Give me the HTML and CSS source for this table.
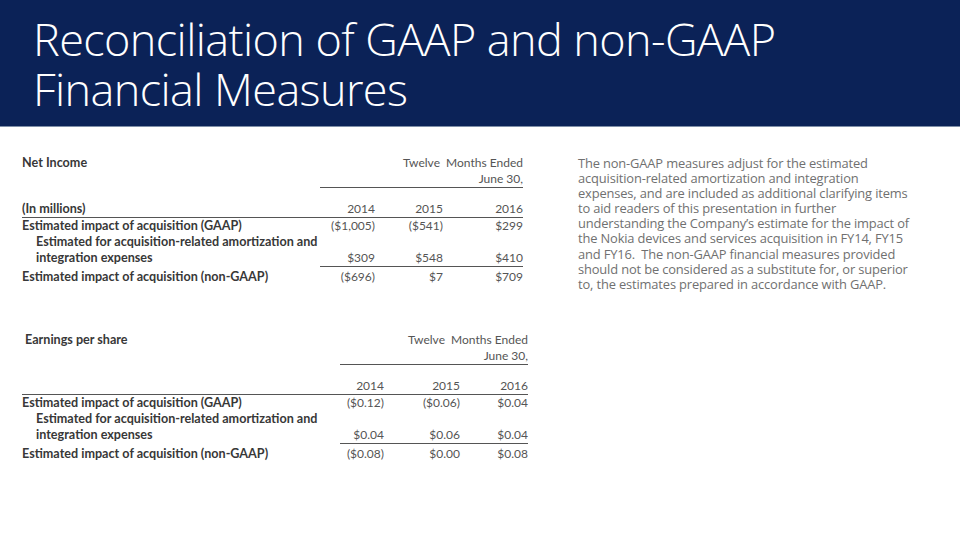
FILE: index.html
```html
<!DOCTYPE html>
<html>
<head>
<meta charset="utf-8">
<link rel="stylesheet" href="styles.css">
</head>
<body>
<header class="banner">
  <h1 class="title">Reconciliation of GAAP and non-GAAP<br>Financial Measures</h1>
</header>
<main class="content">
  <section class="tables">
    <table class="fin fin-a">
      <colgroup><col class="c-label"><col class="c-a1"><col class="c-a2"><col class="c-a3"></colgroup>
      <tr class="r"><td class="lbl b">Net Income</td><td colspan="3" class="hdr">Twelve&nbsp; Months Ended</td></tr>
      <tr class="r"><td></td><td colspan="3" class="hdr ul">June 30,</td></tr>
      <tr class="gap"><td colspan="4"></td></tr>
      <tr class="r full"><td class="lbl b">(In millions)</td><td class="num">2014</td><td class="num">2015</td><td class="num">2016</td></tr>
      <tr class="r"><td class="lbl b">Estimated impact of acquisition (GAAP)</td><td class="num">($1,005)</td><td class="num">($541)</td><td class="num">$299</td></tr>
      <tr class="r"><td class="lbl b ind" colspan="4">Estimated for acquisition-related amortization and</td></tr>
      <tr class="r"><td class="lbl b ind">integration expenses</td><td class="num ul">$309</td><td class="num ul">$548</td><td class="num ul">$410</td></tr>
      <tr class="r last"><td class="lbl b">Estimated impact of acquisition (non-GAAP)</td><td class="num">($696)</td><td class="num">$7</td><td class="num">$709</td></tr>
    </table>

    <table class="fin fin-b">
      <colgroup><col class="c-label2"><col class="c-b1"><col class="c-b2"><col class="c-b3"></colgroup>
      <tr class="r"><td class="lbl b eps">Earnings per share</td><td colspan="3" class="hdr">Twelve&nbsp; Months Ended</td></tr>
      <tr class="r"><td></td><td colspan="3" class="hdr ul">June 30,</td></tr>
      <tr class="gap"><td colspan="4"></td></tr>
      <tr class="r full"><td class="lbl b"></td><td class="num">2014</td><td class="num">2015</td><td class="num">2016</td></tr>
      <tr class="r"><td class="lbl b">Estimated impact of acquisition (GAAP)</td><td class="num">($0.12)</td><td class="num">($0.06)</td><td class="num">$0.04</td></tr>
      <tr class="r"><td class="lbl b ind" colspan="4">Estimated for acquisition-related amortization and</td></tr>
      <tr class="r"><td class="lbl b ind">integration expenses</td><td class="num ul">$0.04</td><td class="num ul">$0.06</td><td class="num ul">$0.04</td></tr>
      <tr class="r last"><td class="lbl b">Estimated impact of acquisition (non-GAAP)</td><td class="num">($0.08)</td><td class="num">$0.00</td><td class="num">$0.08</td></tr>
    </table>
  </section>
  <aside class="note">
    <p>The non-GAAP measures adjust for the estimated<br>
    acquisition-related amortization and integration<br>
    expenses, and are included as additional clarifying items<br>
    to aid readers of this presentation in further<br>
    understanding the Company’s estimate for the impact of<br>
    the Nokia devices and services acquisition in FY14, FY15<br>
    and FY16.&nbsp; The non-GAAP financial measures provided<br>
    should not be considered as a substitute for, or superior<br>
    to, the estimates prepared in accordance with GAAP.</p>
  </aside>
</main>
</body>
</html>
```

FILE: styles.css
```css
html, body {
  margin: 0;
  padding: 0;
  background: #ffffff;
  width: 960px;
  height: 540px;
  overflow: hidden;
}

.banner {
  background: #0b2257;
  height: 127px;
  border-bottom: 1px solid #7f8fa8;
  box-sizing: border-box;
  padding: 14px 0 0 33px;
}

.title {
  margin: 0;
  font-family: "Open Sans", "Lato", sans-serif;
  font-weight: 300;
  font-size: 45px;
  line-height: 50px;
  color: #ffffff;
  letter-spacing: -0.6px;
}

.content {
  display: flex;
  padding: 28px 0 0 22px;
}

.tables {
  width: 506px;
}

.fin {
  border-collapse: collapse;
  font-family: "Lato", "Open Sans", sans-serif;
  font-size: 12px;
  color: #404040;
}

.fin td {
  padding: 0;
  height: 16px;
  line-height: 16px;
  white-space: nowrap;
}

.fin-a { width: 501px; }
.fin-b { width: 506px; margin-top: 47px; }

.c-label { width: 298px; }
.c-a1 { width: 55px; }
.c-a2 { width: 68px; }
.c-a3 { width: 80px; }

.c-label2 { width: 318px; }
.c-b1 { width: 44px; }
.c-b2 { width: 76px; }
.c-b3 { width: 68px; }

.b { font-weight: 700; color: #383838; font-size: 12.6px; }
.ind { padding-left: 14px !important; }
.eps { padding-left: 3px !important; }

.hdr, .num {
  text-align: right;
  color: #555555;
  font-weight: 400;
}

.hdr.ul { border-bottom: 1px solid #555555; height: 16px; vertical-align: top; }
.gap td { height: 13px; }
.full td { border-bottom: 1px solid #555555; }
.num.ul { border-bottom: 1px solid #555555; }
.last td { padding-top: 2px; }

.note {
  margin-left: 50px;
  padding-top: 1px;
}

.note p {
  margin: 0;
  font-family: "Open Sans", "Lato", sans-serif;
  font-size: 12.9px;
  line-height: 15.1px;
  color: #707070;
  letter-spacing: -0.15px;
  white-space: nowrap;
}
```
